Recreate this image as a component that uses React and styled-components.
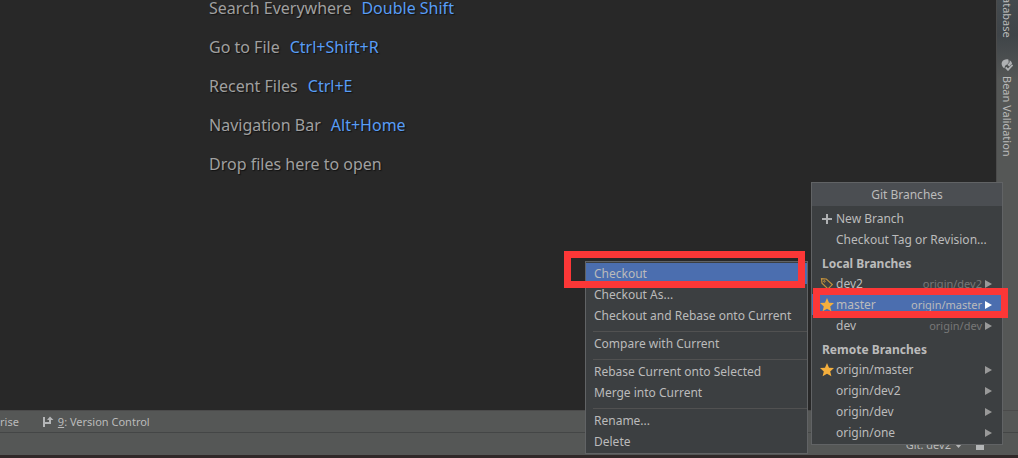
import styled, { createGlobalStyle } from 'styled-components';

const shortcuts = [
  { label: 'Search Everywhere', keys: 'Double Shift' },
  { label: 'Go to File', keys: 'Ctrl+Shift+R' },
  { label: 'Recent Files', keys: 'Ctrl+E' },
  { label: 'Navigation Bar', keys: 'Alt+Home' },
  { label: 'Drop files here to open' },
];

const localBranches = [
  { name: 'dev2', remote: 'origin/dev2', icon: 'tag' },
  { name: 'master', remote: 'origin/master', icon: 'star', selected: true },
  { name: 'dev', remote: 'origin/dev' },
];

const remoteBranches = [
  { name: 'origin/master', icon: 'star' },
  { name: 'origin/dev2' },
  { name: 'origin/dev' },
  { name: 'origin/one' },
];

const actionGroups = [
  ['Checkout', 'Checkout As...', 'Checkout and Rebase onto Current'],
  ['Compare with Current'],
  ['Rebase Current onto Selected', 'Merge into Current'],
  ['Rename...', 'Delete'],
];

const StarIcon = () => (
  <svg width="14" height="14" viewBox="0 0 14 14">
    <path
      fill="#f4af3d"
      d="M7 0l2 4.700 5 .4-3.800 3.300 1.200 4.900L7 10.700l-4.400 2.600 1.200-4.900L0 5.100l5-.4z"
    />
  </svg>
);

const TagIcon = () => (
  <svg width="14" height="14" viewBox="0 0 14 14" fill="none" stroke="#c1903c">
    <path d="M1.500 1.700l4.800.3 6 5.600-4.300 4.300-6-5.700z" strokeWidth="1.200" />
    <circle cx="4.400" cy="4.400" r=".8" />
  </svg>
);

const PlusIcon = () => (
  <svg width="14" height="14" viewBox="0 0 14 14">
    <path d="M6 2h2v4h4v2H8v4H6V8H2V6h4z" fill="#afb1b3" />
  </svg>
);

const ArrowIcon = () => (
  <svg width="7" height="8" viewBox="0 0 7 8">
    <path d="M0 0l7 4-7 4z" fill="currentColor" />
  </svg>
);

const BeanIcon = () => (
  <svg width="12" height="12" viewBox="0 0 12 12">
    <path
      fill="#afb1b3"
      d="M1 3C2 .8 5-.2 7.400 .5L7.800 3.300 6.300 5.300 4.100 6.800 3.400 9.300C1 8.200 0 5.300 1 3z"
    />
    <path fill="#afb1b3" d="M8.700 1.200c1.300.8 2.200 2 2.400 3.400L8.200 7.500 6.300 5.800 8.500 3.500z" />
    <path
      d="M4.700 8.300l2.300 2.500 4.500-4.900"
      fill="none"
      stroke="#afb1b3"
      strokeWidth="1.800"
    />
  </svg>
);

const VersionControlIcon = () => (
  <svg width="11" height="12" viewBox="0 0 11 12">
    <path d="M0 1h2v5h4V4H4l3-3.500L10.500 4H8v4H2v3H0z" fill="#b4b6b7" />
  </svg>
);

const LockIcon = () => (
  <svg width="8" height="12" viewBox="0 0 8 12">
    <path d="M2 6V3a2 2 0 0 1 4 0v3" fill="none" stroke="#b4b6b7" />
    <path d="M0 6h8v6H0z" fill="#b4b6b7" />
  </svg>
);

const DownIcon = () => (
  <svg width="7" height="8" viewBox="0 0 7 8">
    <path d="M1 2l2.500-2L6 2zM0 4h7L3.500 8z" fill="#b4b6b7" />
  </svg>
);

const branchIcons = { star: <StarIcon />, tag: <TagIcon /> };

const BranchRow = ({ branch }) => (
  <BranchButton type="button" $selected={branch.selected}>
    <IconSlot>{branchIcons[branch.icon]}</IconSlot>
    <BranchName>{branch.name}</BranchName>
    {branch.remote && <RemoteName $selected={branch.selected}>{branch.remote}</RemoteName>}
    <ArrowIcon />
    {branch.selected && <BranchMark />}
  </BranchButton>
);

const App = () => (
  <>
    <GlobalStyle />
    <Window>
      <Workspace>
        <Editor>
          {shortcuts.map(({ label, keys }) => (
            <Shortcut key={label}>
              <span>{label}</span>
              {keys && <Keys>{keys}</Keys>}
            </Shortcut>
          ))}
        </Editor>
        <ToolStripe>
          <DatabaseTab type="button">
            <VerticalText>Database</VerticalText>
          </DatabaseTab>
          <StripeTab type="button">
            <BeanIcon />
            <VerticalText>Bean Validation</VerticalText>
          </StripeTab>
        </ToolStripe>
      </Workspace>
      <ToolBar>
        <BarButton type="button">rise</BarButton>
        <BarButton type="button">
          <VersionControlIcon />
          <span>
            <u>9</u>: Version Control
          </span>
        </BarButton>
      </ToolBar>
      <StatusBar>
        <BarButton type="button">
          Git: dev2
          <DownIcon />
        </BarButton>
        <LockIcon />
      </StatusBar>
      <Desktop />

      <ActionMenu>
        {actionGroups.map((group, index) => (
          <ActionGroup key={group[0]} $divided={index > 0}>
            {group.map(action => (
              <ActionButton key={action} type="button" $selected={action === 'Checkout'}>
                {action}
                {action === 'Checkout' && <ActionMark />}
              </ActionButton>
            ))}
          </ActionGroup>
        ))}
      </ActionMenu>

      <BranchPopup>
        <PopupTitle>Git Branches</PopupTitle>
        <BranchButton type="button">
          <IconSlot>
            <PlusIcon />
          </IconSlot>
          New Branch
        </BranchButton>
        <BranchButton type="button">
          <IconSlot />
          Checkout Tag or Revision...
        </BranchButton>
        <GroupTitle>Local Branches</GroupTitle>
        {localBranches.map(branch => (
          <BranchRow key={branch.name} branch={branch} />
        ))}
        <GroupTitle>Remote Branches</GroupTitle>
        {remoteBranches.map(branch => (
          <BranchRow key={branch.name} branch={branch} />
        ))}
      </BranchPopup>
    </Window>
  </>
);

export default App;

const GlobalStyle = createGlobalStyle`
  * {
    box-sizing: border-box;
  }
  body {
    margin: 0;
    background-color: #282828;
    color: #bbbbbb;
    font-family: 'Noto Sans', 'Noto Sans CJK SC', sans-serif;
    font-size: 12px;
  }
  button {
    padding: 0;
    border: none;
    background: none;
    color: inherit;
    font: inherit;
    text-align: left;
    white-space: nowrap;
  }
  svg {
    display: block;
    flex-shrink: 0;
  }
`;

const Window = styled.div`
  position: relative;
  display: flex;
  flex-direction: column;
  min-height: 100vh;
  overflow: hidden;
`;

// editor and the stripe on its right
const Workspace = styled.div`
  display: flex;
  flex: 1;
`;
const Editor = styled.main`
  display: flex;
  flex: 1;
  flex-direction: column;
  gap: 23px;
  padding-left: 209px;
  background-color: #282828;
  color: #a0a0a0;
  font-size: 16px;
  line-height: 16px;
  text-shadow: 1px 1px 1px #111111;
`;
const Shortcut = styled.div`
  display: flex;
  gap: 10px;
`;
const Keys = styled.span`
  color: #589df6;
`;
const ToolStripe = styled.aside`
  display: flex;
  flex-direction: column;
  gap: 21px;
  width: 22px;
  border-left: 1px solid #4b4b4b;
  background: linear-gradient(#444a4e, #3f4448 35px, #555756 80px);
`;
const StripeTab = styled.button`
  display: flex;
  flex-direction: column;
  align-items: center;
  gap: 5px;
  && {
    padding-right: 2px;
  }
`;
const DatabaseTab = styled(StripeTab)`
  justify-content: flex-end;
  height: 38px;
  overflow: hidden;
`;
const VerticalText = styled.span`
  writing-mode: vertical-rl;
  font-size: 11px;
  line-height: 16px;
`;

// bottom bars
const ToolBar = styled.div`
  display: flex;
  gap: 24px;
  height: 23px;
  border-top: 1px solid #4b4b4b;
  border-bottom: 1px solid #444646;
  background-color: #555756;
`;
const StatusBar = styled.footer`
  display: flex;
  align-items: center;
  justify-content: flex-end;
  gap: 14px;
  height: 22px;
  padding-right: 34px;
  background-color: #555756;
`;
const BarButton = styled.button`
  display: flex;
  align-items: center;
  gap: 4px;
  && {
    font-size: 11px;
  }
`;
const Desktop = styled.div`
  height: 3px;
  background-color: #302828;
`;

// popups
const Popup = styled.div`
  position: absolute;
  display: flex;
  flex-direction: column;
  border: 1px solid #616365;
  background-color: #3c3f41;
`;
const ActionMenu = styled(Popup)`
  right: 210px;
  bottom: 4px;
  width: 223px;
  padding: 1px 0;
`;
const ActionGroup = styled.div`
  display: flex;
  flex-direction: column;
  ${({ $divided }) =>
    $divided &&
    `
    &::before {
      content: '';
      height: 1px;
      margin: 5px 0 1px 7px;
      background-color: #515151;
    }
  `}
`;
const ActionButton = styled.button`
  position: relative;
  height: 21px;
  && {
    padding-left: 8px;
    background-color: ${({ $selected }) => ($selected ? '#4b6eaf' : 'transparent')};
  }
`;

const BranchPopup = styled(Popup)`
  right: 15px;
  bottom: 13px;
  width: 192px;
  padding-bottom: 1px;
`;
const PopupTitle = styled.div`
  height: 23px;
  margin-bottom: 2px;
  background-color: #4b4e52;
  line-height: 23px;
  text-align: center;
`;
const GroupTitle = styled.div`
  height: 23px;
  padding: 4px 10px 0;
  font-weight: 700;
  line-height: 19px;
`;
const BranchButton = styled.button`
  position: relative;
  display: flex;
  align-items: center;
  gap: 2px;
  height: 21px;
  && {
    padding: 0 10px 0 8px;
    background-color: ${({ $selected }) => ($selected ? '#4b6eaf' : 'transparent')};
  }
  & > svg {
    color: ${({ $selected }) => ($selected ? '#ffffff' : '#999999')};
  }
`;
const IconSlot = styled.span`
  width: 14px;
`;
const BranchName = styled.span`
  flex: 1;
`;
const RemoteName = styled.span`
  padding-right: 1px;
  color: ${({ $selected }) => ($selected ? '#bbbbbb' : '#777777')};
  font-size: 11px;
`;

// red marks around the selected rows
const Mark = styled.span`
  position: absolute;
  z-index: 1;
  border: 7px solid #fc3737;
  pointer-events: none;
`;
const ActionMark = styled(Mark)`
  inset: -12px 2px -4px -22px;
`;
const BranchMark = styled(Mark)`
  inset: -6px -6px -3px 1px;
`;
